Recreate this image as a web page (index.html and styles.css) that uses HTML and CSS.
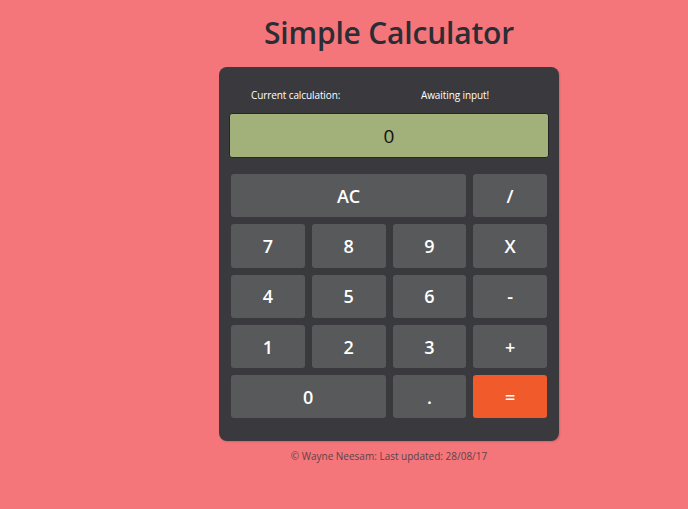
FILE: index.html
```html
<!DOCTYPE html>
<html lang="en">
<head>
<meta charset="utf-8">
<title>Simple Calculator</title>
<link rel="stylesheet" href="styles.css">
</head>
<body>
<main class="page">
  <h1 class="title">Simple Calculator</h1>
  <section class="calc">
    <div class="status">
      <span class="status-label">Current calculation:</span>
      <span class="status-value">Awaiting input!</span>
    </div>
    <div class="display">0</div>
    <div class="keys">
      <button class="key key-wide">AC</button>
      <button class="key">/</button>
      <button class="key">7</button>
      <button class="key">8</button>
      <button class="key">9</button>
      <button class="key">X</button>
      <button class="key">4</button>
      <button class="key">5</button>
      <button class="key">6</button>
      <button class="key">-</button>
      <button class="key">1</button>
      <button class="key">2</button>
      <button class="key">3</button>
      <button class="key">+</button>
      <button class="key key-double">0</button>
      <button class="key">.</button>
      <button class="key key-equals">=</button>
    </div>
  </section>
  <p class="footer">© Wayne Neesam: Last updated: 28/08/17</p>
</main>
</body>
</html>
```

FILE: styles.css
```css
html, body {
  margin: 0;
  padding: 0;
}
body {
  background: #f4767a;
  font-family: "Open Sans", "Noto Sans", sans-serif;
  width: 688px;
  height: 509px;
  overflow: hidden;
}
.page {
  padding-left: 90px;
  display: flex;
  flex-direction: column;
  align-items: center;
}
.title {
  margin: 14px 0 0;
  height: 53px;
  font-size: 30px;
  line-height: 38px;
  font-weight: 600;
  color: #2b2d35;
  letter-spacing: -0.2px;
}
.calc {
  width: 340px;
  box-sizing: border-box;
  background: #3a3a3e;
  border-radius: 8px;
  padding: 10px;
  box-shadow: 1px 1px 2px rgba(0,0,0,0.15);
}
.status {
  height: 36px;
  display: grid;
  grid-template-columns: 170px 1fr;
  align-items: center;
  padding-left: 22px;
  color: #ffffff;
  font-size: 10px;
  letter-spacing: -0.1px;
}
.display {
  height: 45px;
  box-sizing: border-box;
  background: #a2b07a;
  border: 1px solid #25262a;
  border-radius: 3px;
  display: flex;
  align-items: center;
  justify-content: center;
  font-size: 19px;
  color: #111111;
}
.keys {
  display: grid;
  grid-template-columns: repeat(4, 1fr);
  grid-auto-rows: 43.3px;
  gap: 7px;
  padding: 16px 2px 13px;
}
.key {
  border: none;
  border-radius: 3px;
  background: #58595b;
  color: #ffffff;
  font-family: inherit;
  font-size: 18px;
  font-weight: 600;
  padding: 0;
}
.key-wide {
  grid-column: span 3;
}
.key-double {
  grid-column: span 2;
}
.key-equals {
  background: #f15a2b;
}
.footer {
  margin: 8px 0 0;
  font-size: 10px;
  color: #5e4247;
}
```
